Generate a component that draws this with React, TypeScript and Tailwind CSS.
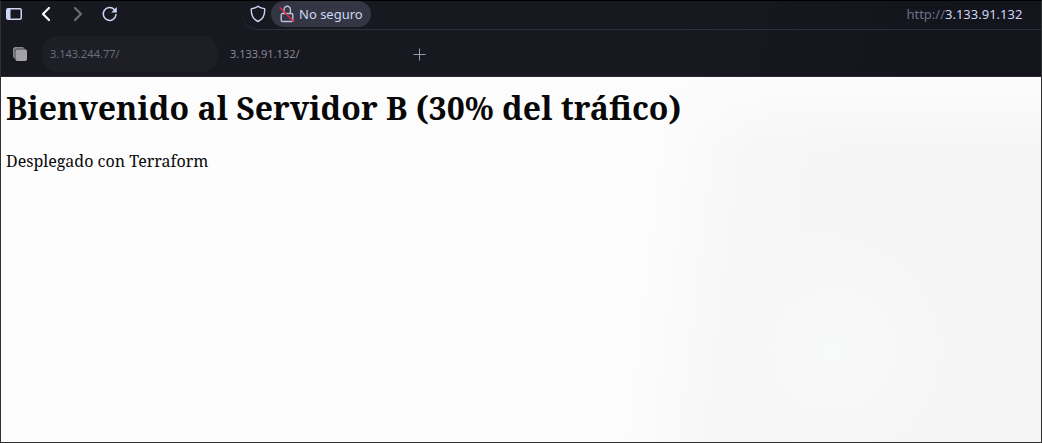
import React from "react";

const toolButton = "flex h-[27px] w-8 items-center justify-center";

function Toolbar() {
  return (
    <div className="flex h-7 items-start">
      <nav aria-label="Navegación" className="flex w-[241px] shrink-0 items-start">
        <button type="button" aria-label="Barra lateral" className="flex h-[27px] w-7 items-center justify-start pl-[5px]">
          <svg width="16" height="13" viewBox="0 0 16 13" fill="none">
            <rect x="0.75" y="0.75" width="14.5" height="10.5" rx="1.5" stroke="#cdd6f4" strokeWidth="1.5" />
            <path d="M1 1h3.5v10H1z" fill="#cdd6f4" />
          </svg>
        </button>
        <button type="button" aria-label="Atrás" className={toolButton}>
          <svg width="16" height="17" viewBox="0 0 16 17" fill="none" stroke="#ffffff" strokeWidth="2.2" strokeLinecap="round" strokeLinejoin="round">
            <path d="M12 2L6 8l6 6" />
          </svg>
        </button>
        <button type="button" aria-label="Adelante" disabled className={toolButton}>
          <svg width="16" height="17" viewBox="0 0 16 17" fill="none" stroke="#6f6f73" strokeWidth="2.2" strokeLinecap="round" strokeLinejoin="round">
            <path d="M6 2l6 6-6 6" />
          </svg>
        </button>
        <button type="button" aria-label="Recargar" className={toolButton}>
          <svg width="16" height="17" viewBox="0 0 16 17" fill="none">
            <path d="M13.3 3.6A6.4 6.4 0 1 0 15 8.5" stroke="#cdd6f4" strokeWidth="1.5" strokeLinecap="round" />
            <path d="M15.8 1v5.5H10.2z" fill="#cdd6f4" />
          </svg>
        </button>
      </nav>
      <div className="flex h-[29px] min-w-0 flex-1 items-start rounded-bl-2xl border-b border-[#2f2f39] pr-4">
        <button type="button" aria-label="Protección" className="flex h-[26px] w-[29px] shrink-0 items-center justify-center pl-[3px]">
          <svg width="16" height="18" viewBox="0 0 16 18" fill="none" stroke="#cdd6f4" strokeWidth="1.4" strokeLinejoin="round">
            <path d="M8 1.2c1.9 1.5 4.1 2.2 6.6 2.4.5 5.6-1.5 10.4-6.6 12.900C2.900 14 .9 9.200 1.400 3.600 3.900 3.400 6.100 2.700 8 1.200z" />
          </svg>
        </button>
        <button type="button" className="flex h-[26px] shrink-0 items-center gap-1 rounded-full bg-[#353644] px-2 text-[13px] text-[#cdd6f4]">
          <svg width="16" height="18" viewBox="0 0 16 18" fill="none">
            <path d="M5 8.500V4.500a3.200 3.200 0 0 1 6.400 0V8.500M3.500 8.500h9a1.300 1.300 0 0 1 1.300 1.300v5.400a1.300 1.300 0 0 1-1.300 1.300h-9a1.300 1.300 0 0 1-1.300-1.300V9.800A1.300 1.300 0 0 1 3.500 8.500z" stroke="#b9c0dc" strokeWidth="1.4" />
            <path d="M1 2.800l13.500 13.500" stroke="#e22850" strokeWidth="1.500" strokeLinecap="round" />
          </svg>
          <span className="pt-px">No seguro</span>
        </button>
        <div className="flex h-7 min-w-0 flex-1 items-center justify-end text-[13px]">
          <label htmlFor="address" className="text-[#6c7086]">http://</label>
          <input
            id="address"
            type="text"
            defaultValue="3.133.91.132"
            className="w-20 bg-transparent p-0 text-[#cdd6f4] outline-none"
          />
        </div>
      </div>
    </div>
  );
}

function TabStrip() {
  return (
    <div className="flex h-[47px] items-start pt-[7px] text-[11px]">
      <button type="button" aria-label="Espacios" className="flex h-9 w-[41px] items-center justify-start pl-[11px]">
        <svg width="16" height="16" viewBox="0 0 16 16">
          <rect x="1" y="1" width="11.5" height="11.5" rx="2.5" fill="#8b8b8f" />
          <rect x="2.6" y="2.6" width="12.400" height="12.400" rx="3" fill="#44444b" />
          <rect x="3.500" y="3.500" width="11.500" height="11.500" rx="2" fill="#a3a3a7" />
        </svg>
      </button>
      <div role="tablist" aria-label="Pestañas" className="flex gap-1">
        <button type="button" role="tab" aria-selected="false" className="h-9 w-44 rounded-2xl bg-[#1e1e26] px-2 text-left text-[#6c6d79]">
          3.143.244.77/
        </button>
        <button type="button" role="tab" aria-selected="true" className="h-9 w-44 px-2 text-left text-[#858797]">
          3.133.91.132/
        </button>
      </div>
      <button type="button" aria-label="Nueva pestaña" className="flex h-9 w-[42px] items-center justify-center">
        <svg width="13" height="13" viewBox="0 0 13 13" stroke="#9799aa" strokeWidth="1">
          <path d="M6.500 0.500v12M0.500 6.500h12" />
        </svg>
      </button>
    </div>
  );
}

export default function App() {
  return (
    <div className="flex min-h-screen flex-col border border-[#303030] border-t-black bg-[#fdfdfd]">
      <header className="border-b border-[#2c2a33] bg-[linear-gradient(100deg,#181820_65%,#14141d_90%)] font-['Noto_Sans',sans-serif]">
        <Toolbar />
        <TabStrip />
      </header>
      <main className="flex-1 bg-[radial-gradient(circle_at_80%_75%,#f8faf9_0,#f7f7f7_8%,transparent_14%),linear-gradient(180deg,#fbfcfb,transparent_20%),linear-gradient(97deg,#fdfdfd_60%,#f6f6f6_71%,#f5f5f5)] px-[5px] py-2 font-['Noto_Serif','Droid_Serif','Liberation_Serif',serif] text-[#080808]">
        <h1 className="text-[32px] leading-[46px] font-bold">Bienvenido al Servidor B (30% del tráfico)</h1>
        <p className="mt-[18px] text-[16px] leading-6">Desplegado con Terraform</p>
      </main>
    </div>
  );
}
